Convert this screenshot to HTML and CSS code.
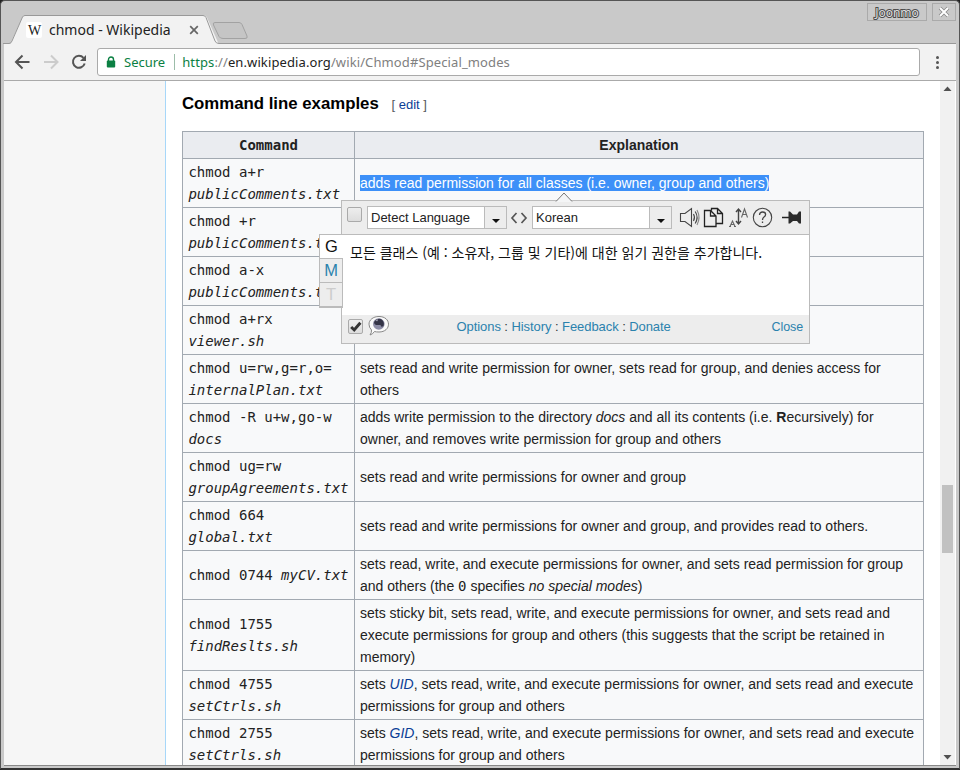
FILE: index.html
```html
<!DOCTYPE html>
<html lang="en">
<head>
<meta charset="utf-8">
<title>chmod - Wikipedia</title>
<link rel="stylesheet" href="styles.css">
</head>
<body>
<div class="window">
  <header class="titlebar">
    <div class="tab">
      <svg class="tab-shape" width="258" height="44" viewBox="0 0 258 44"><path d="M0 43.5H7.500L19.500 17Q20.500 15.500 22 15.500H201Q203 15.500 204 17.500L215.500 43.500H254V44H0Z" fill="#f2f2f2"/><path d="M0 43.500H6Q8 43.500 9 41L19.500 17Q20.500 15.500 22 15.500H200Q202 15.500 203 17.500L212 41Q213 43.500 216 43.500H258" fill="none" stroke="#999"/><path d="M212 22.500H236Q238 22.500 239 24.500L244 36Q245 38.500 242 38.500H220Q217 38.500 216 36.500L210.500 25Q209.500 22.500 212 22.500Z" fill="#c5c5c5" stroke="#a2a2a2"/></svg>
      <span class="favicon">W</span>
      <span class="tab-title">chmod - Wikipedia</span>
      <svg class="tab-close" width="10" height="10" viewBox="0 0 10 10"><path d="M1.200 1.200L8.800 8.800M8.800 1.200L1.200 8.800" stroke="#666" stroke-width="1.700"/></svg>
    </div>
    <div class="window-user">Joonmo</div>
    <div class="window-close"><svg width="12" height="12" viewBox="0 0 12 12"><path d="M2 2L10 10M10 2L2 10" stroke="#888" stroke-width="3.600"/><path d="M2 2L10 10M10 2L2 10" stroke="#fff" stroke-width="2"/></svg></div>
  </header>
  <nav class="toolbar">
    <svg width="86" height="18" viewBox="0 0 86 18" fill="none" stroke-width="2"><path d="M27 9H14M20 2.500L13.500 9L20 15.500" stroke="#555" transform="translate(-9.500 0)"/><path d="M32 9H45M39 2.500L45.500 9L39 15.500" stroke="#ccc"/><path d="M71.500 4.800A6 6 0 1 0 72.700 10.500" stroke="#555"/><path d="M74 2V8H68Z" fill="#555"/></svg>
    <div class="address">
      <svg width="10" height="12" viewBox="0 0 10 12"><path d="M2.500 5V3.500a2.500 2.500 0 0 1 5 0V5" fill="none" stroke="#0b8043" stroke-width="1.400"/><rect x=".8" y="4.500" width="8.400" height="7" rx="1" fill="#0b8043"/></svg>
      <span class="secure">Secure</span>
      <span class="url"><b>https</b>://<i>en.wikipedia.org</i>/wiki/Chmod#Special_modes</span>
    </div>
    <div class="menu-dots"><span></span><span></span><span></span></div>
  </nav>
  <div class="viewport">
    <aside class="sidebar"></aside>
    <main class="article">
      <h3>Command line examples <span class="edit">[ <a>edit</a> ]</span></h3>
      <table>
        <colgroup><col class="col-command"><col></colgroup>
        <tr><th class="mono">Command</th><th>Explanation</th></tr>
        <tr><td class="mono">chmod a+r<br><i>publicComments.txt</i></td><td><span class="selected">adds read permission for all classes (i.e. owner, group and others)</span></td></tr>
        <tr><td class="mono">chmod +r<br><i>publicComments.txt</i></td><td></td></tr>
        <tr><td class="mono">chmod a-x<br><i>publicComments.txt</i></td><td></td></tr>
        <tr><td class="mono">chmod a+rx<br><i>viewer.sh</i></td><td></td></tr>
        <tr><td class="mono">chmod u=rw,g=r,o=<br><i>internalPlan.txt</i></td><td>sets read and write permission for owner, sets read for group, and denies access for<br>others</td></tr>
        <tr><td class="mono">chmod -R u+w,go-w<br><i>docs</i></td><td>adds write permission to the directory <i>docs</i> and all its contents (i.e. <b>R</b>ecursively) for<br>owner, and removes write permission for group and others</td></tr>
        <tr><td class="mono">chmod ug=rw<br><i>groupAgreements.txt</i></td><td>sets read and write permissions for owner and group</td></tr>
        <tr><td class="mono">chmod 664<br><i>global.txt</i></td><td>sets read and write permissions for owner and group, and provides read to others.</td></tr>
        <tr><td class="mono">chmod 0744 <i>myCV.txt</i></td><td>sets read, write, and execute permissions for owner, and sets read permission for group<br>and others (the <code>0</code> specifies <i>no special modes</i>)</td></tr>
        <tr><td class="mono">chmod 1755<br><i>findReslts.sh</i></td><td>sets sticky bit, sets read, write, and execute permissions for owner, and sets read and<br>execute permissions for group and others (this suggests that the script be retained in<br>memory)</td></tr>
        <tr><td class="mono">chmod 4755<br><i>setCtrls.sh</i></td><td>sets <a><i>UID</i></a>, sets read, write, and execute permissions for owner, and sets read and execute<br>permissions for group and others</td></tr>
        <tr><td class="mono">chmod 2755<br><i>setCtrls.sh</i></td><td>sets <a><i>GID</i></a>, sets read, write, and execute permissions for owner, and sets read and execute<br>permissions for group and others</td></tr>
      </table>
    </main>
    <div class="scrollbar">
      <svg width="9" height="5" viewBox="0 0 9 5"><path d="M.5 5L4.500 .5L8.500 5Z" fill="#505050"/></svg>
      <div class="thumb"></div>
      <svg width="9" height="5" viewBox="0 0 9 5"><path d="M.5 0L4.500 4.500L8.500 0Z" fill="#505050"/></svg>
    </div>
  </div>
</div>

<section class="popup">
  <svg class="pointer" width="18" height="10" viewBox="0 0 18 10"><path d="M1 9.500L9 1L17 9.500V10H1Z" fill="#f4f5f6"/><path d="M1 9.500L9 1L17 9.500" fill="none" stroke="#777"/></svg>
  <div class="engines"><span class="active">G</span><span>M</span><span class="off">T</span></div>
  <div class="popup-head">
    <span class="check"></span>
    <div class="select source"><span>Detect Language</span><em></em></div>
    <svg class="swap" width="18" height="12" viewBox="0 0 18 12"><path d="M6.500 1L2 6L6.500 11M11.500 1L16 6L11.500 11" fill="none" stroke="#555" stroke-width="1.700"/></svg>
    <div class="select"><span>Korean</span><em></em></div>
    <svg class="tools" width="124" height="22" viewBox="679 206 124 22" fill="none" stroke="#444" stroke-width="1.100">
      <path d="M680.500 213.500H685L691.500 208.500V226.500L685 221.500H680.500ZM693.500 214Q695.500 217.500 693.500 221M695.200 211.500Q699 217.500 695.200 223.500"/>
      <path d="M697 210Q701 217.500 697 225" stroke="#888"/>
      <path d="M711.500 210.500V208.500H717.500L722.500 213.500V223.500H716.500M717.500 208.500V213.500H722.500M704.500 210.500H710.500L716 216V226.500H704.500ZM710.500 210.500V216H716" stroke="#222" stroke-width="1.300"/>
      <path d="M738.500 209.500V223.500M736 212L738.500 209L741 212M736 221L738.500 224L741 221" stroke-width="1.400"/>
      <path d="M730 226.500L732.500 221L735 226.500M731 224.500H734M729 226.500H731M734 226.500H736M741.500 217.500L744.500 209L747.500 217.500M742.500 214.500H746.500" stroke="#666"/>
      <circle cx="762.500" cy="217.500" r="9.200"/>
      <path d="M759.500 215Q759.700 212 762.600 212Q765.600 212 765.600 214.500Q765.600 216 764 217Q762.500 218 762.500 220M762.500 221.500V223" stroke-width="1.300"/>
      <path d="M782 217.500H789" stroke="#222" stroke-width="1.500"/>
      <path d="M788.500 211.500H790L793 214.500H797L799 211.500H801V223.500H799L797 221H793L790 223.500H788.500Z" fill="#2b2b2b" stroke="none"/>
    </svg>
  </div>
  <div class="popup-body" lang="ko">모든 클래스 (예 : 소유자, 그룹 및 기타)에 대한 읽기 권한을 추가합니다.</div>
  <div class="popup-foot">
    <span class="check"><svg width="13" height="13" viewBox="0 0 12 12"><path d="M2 6.500L4.800 9.200L10.500 2.500" fill="none" stroke="#333" stroke-width="2.700"/></svg></span>
    <svg class="bubble" width="22" height="22" viewBox="0 0 22 22"><path d="M11 1.500C17 1.500 20.500 5 20.500 9.200S17 17 11 17Q8 17 6.500 16.500Q5 19 2 20Q3.800 17.500 3.500 15Q1 12.500 1 9.200C1 5 5 1.500 11 1.500Z" fill="#fafafa" stroke="#888"/><circle cx="10.800" cy="9" r="5.800" fill="#8c8ca6"/><path d="M6 7Q9 2.500 13 4Q17 7 15.500 11Q13 13 12.500 10L8 10Q6 9.500 6 7Z" fill="#343447"/><path d="M8 5L10 4.500L9 6.500Z" fill="#ccd"/></svg>
    <div class="links"><a>Options</a> : <a>History</a> : <a>Feedback</a> : <a>Donate</a></div>
    <a class="close">Close</a>
  </div>
</section>
</body>
</html>
```
FILE: styles.css
```css
* { box-sizing: border-box; }
body { margin: 0; width: 960px; height: 770px; overflow: hidden; position: relative; background: #222; font-family: "Liberation Sans", sans-serif; }
.window { height: 770px; display: flex; flex-direction: column; background: #c9c9c9; border: 1px solid #555; border-bottom: 2px solid #333; border-radius: 5px 5px 2px 2px; padding: 0 3px 2px 2px; }
.titlebar { height: 43px; flex: none; display: flex; border-bottom: 1px solid #999; }
.tab { position: relative; flex: 1; display: flex; align-items: flex-start; padding: 20px 0 0 22px; font: 14px/18px "Noto Sans", sans-serif; color: #222; }
.tab > span { position: relative; }
.tab-shape { position: absolute; left: 0; top: -1px; }
.favicon { width: 16px; height: 16px; margin: 1px 7px 0 1px; background: #fff; border-radius: 2px; font: 14px/17px "Liberation Serif", serif; text-align: center; text-indent: 1px; }
.tab-title { width: 140px; font-size: 14px; white-space: nowrap; }
.tab-close { position: relative; margin-top: 4px; }
.window-user, .window-close { height: 18px; margin-top: 2px; border: 1px solid #aaa; display: flex; align-items: center; justify-content: center; }
.window-user { width: 60px; font: 12px "Noto Sans", sans-serif; color: #ddd; -webkit-text-stroke: 2px #4c4c4c; paint-order: stroke fill; }
.window-close { width: 24px; margin-left: 5px; }
.toolbar { height: 37px; flex: none; display: flex; align-items: center; background: #f2f2f2; border-bottom: 1px solid #aaa; padding: 0 15px 0 8px; margin-left: 1px; }
.address { flex: 1; height: 28px; margin-left: -1px; border: 1px solid #aaa; border-radius: 3px; background: #fff; display: flex; align-items: center; padding-left: 8px; font: 13px "Noto Sans", sans-serif; }
.secure { color: #0b8043; margin-left: 8px; padding-right: 9px; border-right: 1px solid #9cbda9; line-height: 16px; }
.url { margin-left: 7px; color: #808080; white-space: nowrap; letter-spacing: .11px; }
.url b { font-weight: 400; color: #0b8043; }
.url i { font-style: normal; color: #222; }
.menu-dots { width: 5px; margin-left: 16px; display: flex; flex-direction: column; gap: 2px; }
.menu-dots span { width: 3px; height: 3px; border-radius: 50%; background: #555; }
.viewport { flex: 1; min-height: 0; display: flex; margin-left: 1px; background: #fff; border-bottom: 1px solid #888; overflow: hidden; }
.sidebar { width: 162px; background: #f6f6f6; border-right: 1px solid #a7d7f9; }
.article { width: 774px; padding-left: 16px; color: #222; font-size: 14px; line-height: 22px; }
h3 { margin: 12px 0 16px; height: 22px; font-size: 16.8px; line-height: 22px; color: #000; white-space: nowrap; }
.edit { margin-left: 8px; font-size: 13px; font-weight: 400; color: #54595d; }
.article a { color: #0b3e96; }
table { width: 742px; table-layout: fixed; border-collapse: collapse; background: #f8f9fa; }
.col-command { width: 172px; }
th, td { border: 1px solid #a2a9b1; padding: 2px 5px; line-height: 22px; vertical-align: middle; white-space: nowrap; text-align: left; }
th { background: #eaecf0; text-align: center; }
.mono, code { font-family: "DejaVu Sans Mono", monospace; font-size: 14px; line-height: 22px; }
td.mono { padding-left: 5.400px; padding-right: 0; }
.selected { background: #3d90f8; color: #fff; }
.scrollbar { width: 15px; background: #f1f1f1; display: flex; flex-direction: column; align-items: center; padding: 5px 0; }
.thumb { width: 11px; height: 68px; background: #c1c1c1; margin: 394px 0 auto; }
.popup { position: absolute; left: 341px; top: 200px; width: 469px; height: 144px; border: 1px solid #bbb; background: #ededed; display: flex; flex-direction: column; font-size: 13px; }
.pointer { position: absolute; left: 213px; top: -9px; }
.engines { position: absolute; left: -23px; top: 33px; width: 24px; height: 74px; border: 1px solid #bbb; border-right: 0; border-bottom-width: 2px; display: flex; flex-direction: column; background: #ededed; }
.engines span { flex: 1; display: flex; align-items: center; justify-content: center; font-size: 16.500px; color: #2b82ad; border-right: 1px solid #bbb; border-top: 1px solid #bbb; }
.engines .active { background: #fff; color: #111; border-right: 0; border-top: 0; }
.engines .off { color: #ccc; }
.popup-head { height: 34px; flex: none; border-bottom: 1px solid #bbb; padding: 5px 5px 0; display: flex; }
.check { width: 15px; height: 15px; margin-top: 1px; border: 1px solid #aaa; border-radius: 2px; background: linear-gradient(#eee, #ddd); display: flex; flex: none; }
.select { width: 140px; height: 23px; border: 1px solid #bbb; background: #fff; color: #222; display: flex; line-height: 21px; }
.select span { flex: 1; padding-left: 3px; white-space: nowrap; }
.select em { width: 22px; background: #ededed; border-left: 1px solid #bbb; display: flex; justify-content: center; padding-top: 12px; }
.select em::before { content: ""; height: 4px; border: 4px solid transparent; border-top-color: #111; border-bottom: 0; }
.source { margin-left: 5px; }
.swap { margin: 6px 4px 0 3px; }
.tools { margin-left: 7px; flex: none; }
.popup-body { height: 80px; flex: none; background: #fff; color: #111; padding: 7px 0 0 8px; font: 14px/20px "Noto Sans CJK KR", sans-serif; white-space: nowrap; }
.popup-foot { flex: 1; padding: 0 6px; display: flex; }
.popup-foot .check { margin-top: 4px; }
.popup-foot a { color: #2b82ad; }
.bubble { margin-left: 5px; flex: none; }
.links { margin: 4px 0 0 66.500px; color: #333; white-space: nowrap; line-height: 15px; letter-spacing: -.07px; }
.close { margin: 4px 0 0 auto; font-size: 12.500px; line-height: 16px; letter-spacing: -.1px; }
```
